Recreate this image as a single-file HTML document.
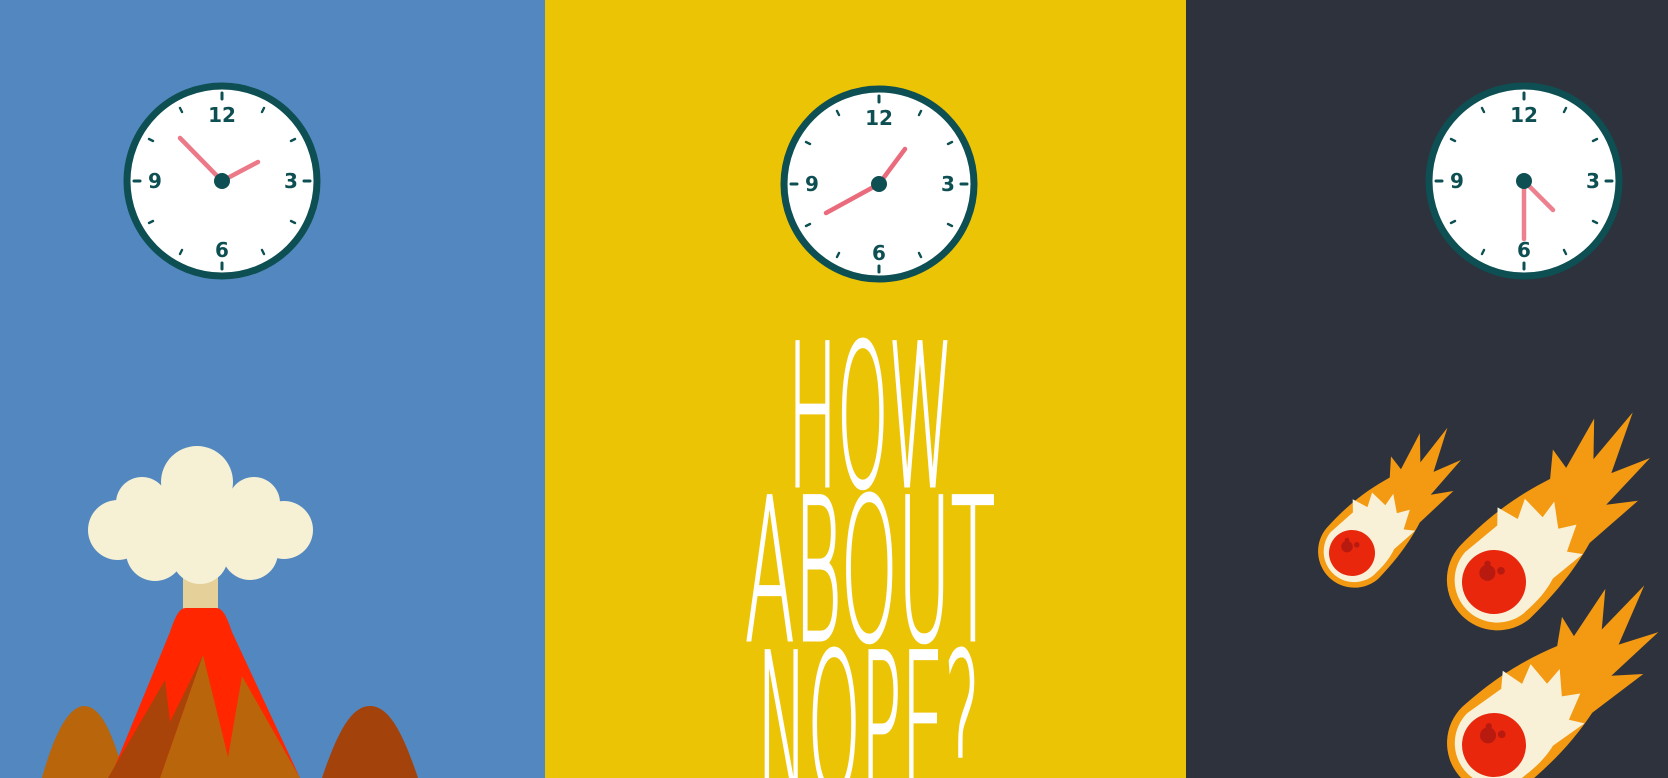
<!DOCTYPE html>
<html><head><meta charset="utf-8"><style>
html,body{margin:0;padding:0;width:1668px;height:778px;overflow:hidden;background:#2e323c}
svg{display:block;overflow:hidden}
</style></head><body>
<svg width="1668" height="778" viewBox="0 0 1668 778" xmlns="http://www.w3.org/2000/svg">
<defs>
<clipPath id="cp"><rect x="0" y="0" width="1668" height="778"/></clipPath>
<g id="face">
  <circle r="95" fill="#fff" stroke="#0d4f52" stroke-width="7"/>
  <g stroke="#0d4f52" stroke-width="3" stroke-linecap="round">
    <line x1="0" y1="-88" x2="0" y2="-82"/><line x1="0" y1="88" x2="0" y2="82"/>
    <line x1="-88" y1="0" x2="-82" y2="0"/><line x1="88" y1="0" x2="82" y2="0"/>
    <g stroke-width="2.4">
    <line x1="42" y1="-73" x2="40" y2="-69"/><line x1="73" y1="-42" x2="69" y2="-40"/>
    <line x1="73" y1="42" x2="69" y2="40"/><line x1="42" y1="73" x2="40" y2="69"/>
    <line x1="-42" y1="73" x2="-40" y2="69"/><line x1="-73" y1="42" x2="-69" y2="40"/>
    <line x1="-73" y1="-42" x2="-69" y2="-40"/><line x1="-42" y1="-73" x2="-40" y2="-69"/>
    </g>
  </g>
  <g fill="#0d4f52" font-family="'DejaVu Sans','Liberation Sans',sans-serif" font-weight="bold" font-size="20" text-anchor="middle">
    <text x="0" y="-59">12</text><text x="0" y="76">6</text>
    <text x="-67" y="7">9</text><text x="69" y="7">3</text>
  </g>
</g>
<g id="comet">
  <path fill="#f39a12" d="M0,-1.55 C1.5,-1.6 2.5,-1.4 3.5,-1.1 L4.2,-1.7 L4.1,-1.0 L5.8,-1.5 L4.9,-0.6 L6.8,-0.8 L5,0.1 L6.2,0.6 L4.2,0.7 L5,1.3 L3,1.2 C2,1.5 1,1.6 0,1.6 A1.58,1.58 0 0 1 0,-1.55 Z"/>
  <path fill="#f8f1d8" d="M0,-1.3 L1.3,-1.2 L1.7,-1.6 L1.9,-0.9 L2.5,-1.2 L2.5,-0.4 L3.1,-0.5 L2.6,0.2 L3.1,0.5 L2.3,0.9 L2.6,1.3 L1.4,1.2 C0.8,1.4 0.3,1.35 0,1.35 A1.33,1.33 0 0 1 0,-1.3Z"/>
  <circle r="1" fill="#e8270c"/>
  <circle cx="0.05" cy="-0.35" r="0.25" fill="#b81a10"/>
  <circle cx="0.4" cy="-0.1" r="0.12" fill="#b81a10"/>
  <circle cx="0.25" cy="-0.55" r="0.1" fill="#b81a10"/>
</g>
</defs>
<g clip-path="url(#cp)">
<rect x="0" y="0" width="545" height="778" fill="#5288bf"/>
<rect x="545" y="0" width="641" height="778" fill="#ecc406"/>
<rect x="1186" y="0" width="482" height="778" fill="#2e323c"/>

<g transform="translate(222,181)"><use href="#face"/></g>
<g stroke="#ea6b7c" stroke-width="4.5" stroke-linecap="round" opacity="0.9"><line x1="222" y1="181" x2="180" y2="138"/><line x1="222" y1="181" x2="258" y2="162"/></g>
<circle cx="222" cy="181" r="8" fill="#0d4f52"/>

<g transform="translate(879,184)"><use href="#face"/></g>
<g stroke="#ea6b7c" stroke-width="4.5" stroke-linecap="round"><line x1="879" y1="184" x2="905" y2="149"/><line x1="879" y1="184" x2="826" y2="213"/></g>
<circle cx="879" cy="184" r="8" fill="#0d4f52"/>

<g transform="translate(1524,181)"><use href="#face"/></g>
<g stroke="#ea6b7c" stroke-width="4.5" stroke-linecap="round" opacity="0.85"><line x1="1524" y1="181" x2="1524" y2="239"/><line x1="1524" y1="181" x2="1553" y2="210"/></g>
<circle cx="1524" cy="181" r="8" fill="#0d4f52"/>

<g fill="#fff" stroke="#fff" stroke-width="1.5" font-family="'DejaVu Sans','Liberation Sans',sans-serif" font-weight="200" font-size="100">
  <text transform="translate(788,486) scale(1,1.98)" textLength="165" lengthAdjust="spacingAndGlyphs">HOW</text>
  <text transform="translate(745,640) scale(1,1.98)" textLength="250" lengthAdjust="spacingAndGlyphs">ABOUT</text>
  <text transform="translate(757,795) scale(1,1.98)" textLength="223" lengthAdjust="spacingAndGlyphs">NOPE?</text>
</g>

<path d="M42,778 C55,730 70,706 84,706 C100,706 112,730 125,778Z" fill="#b8650c"/>
<path d="M322,778 C338,730 352,706 370,706 C388,706 402,730 418,778Z" fill="#a4420b"/>
<rect x="183" y="570" width="35" height="42" fill="#e5d09a"/>
<path d="M110,778 L170,632 C176,614 180,608 186,608 L216,608 C222,608 226,614 232,632 L300,778Z" fill="#ff2600"/>
<path d="M108,778 L165,680 L170,722 L203,655 L160,778Z" fill="#a8430a"/>
<path d="M160,778 L203,655 L228,757 L242,676 L300,778Z" fill="#b8650c"/>
<g fill="#f6f0d4">
  <circle cx="197" cy="482" r="36"/><circle cx="142" cy="503" r="26"/><circle cx="254" cy="503" r="26"/>
  <circle cx="118" cy="530" r="30"/><circle cx="284" cy="530" r="29"/>
  <circle cx="155" cy="552" r="29"/><circle cx="200" cy="556" r="28"/><circle cx="250" cy="552" r="28"/>
  <rect x="130" y="490" width="140" height="70"/>
</g>

<g transform="translate(1352,553) rotate(-46) scale(23)"><use href="#comet"/></g>
<g transform="translate(1494,582) rotate(-44) scale(32)"><use href="#comet"/></g>
<g transform="translate(1494,745) rotate(-40) scale(32)"><use href="#comet"/></g>
</g>
</svg>
</body></html>
